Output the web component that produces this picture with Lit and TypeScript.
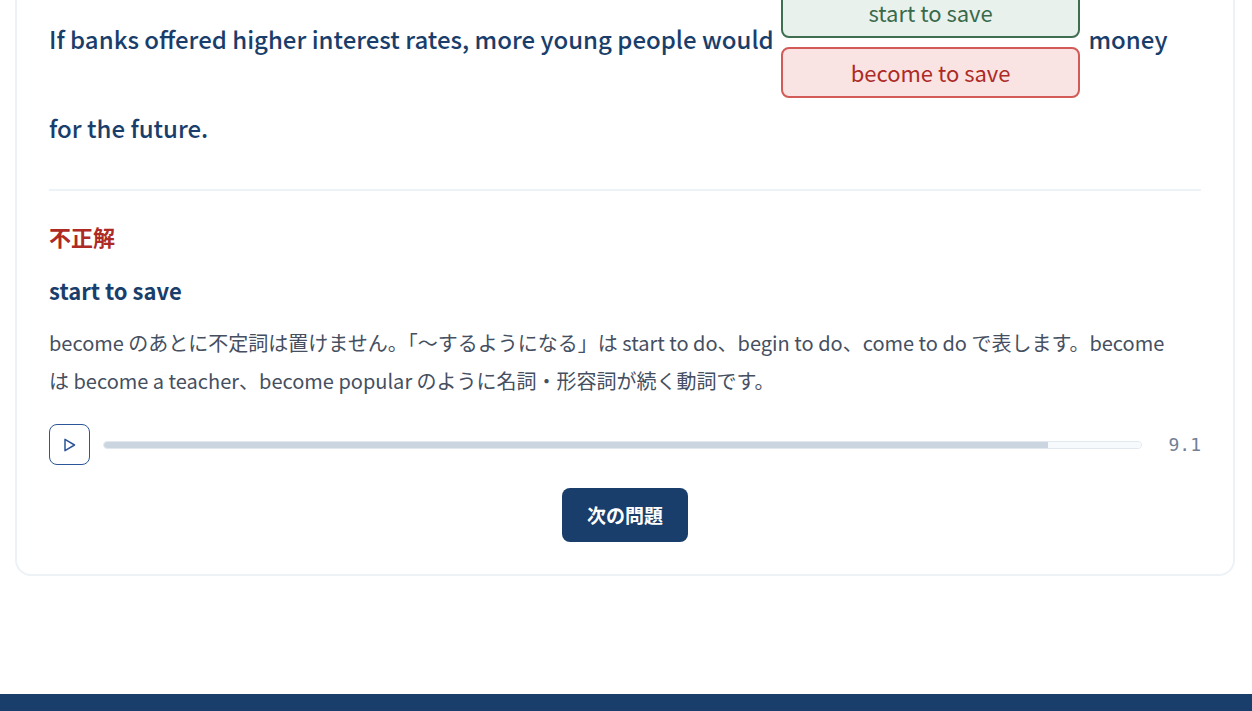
import { LitElement, html, css } from "lit";
import { customElement, property } from "lit/decorators.js";

@customElement("audio-bar")
class AudioBar extends LitElement {
  @property({ type: Number }) played = 91;
  @property() time = "9.1";

  static styles = css`
    :host {
      display: flex;
      align-items: center;
      gap: 13px;
    }
    .play {
      display: grid;
      place-items: center;
      box-sizing: border-box;
      width: 41px;
      height: 41px;
      padding: 0;
      border: 1px solid #2c5698;
      border-radius: 8px;
      background: #fff;
      color: #2c5698;
      cursor: pointer;
    }
    .track {
      appearance: none;
      display: block;
      box-sizing: border-box;
      flex: 1;
      min-width: 0;
      height: 8px;
      border: 1px solid #e2e8f0;
      border-radius: 4px;
      background: #f7fafc;
      overflow: hidden;
    }
    .track::-webkit-progress-bar {
      background: #f7fafc;
    }
    .track::-webkit-progress-value {
      background: #cbd5e0;
    }
    .time {
      min-width: 46px;
      text-align: right;
      color: #718096;
      font: 18px/24px "DejaVu Sans Mono", monospace;
    }
  `;

  render() {
    return html`
      <button class="play" type="button" aria-label="再生">
        <svg width="16" height="16" viewBox="0 0 16 16" fill="none" stroke="currentColor" stroke-width="1.5" stroke-linejoin="round" aria-hidden="true">
          <path d="M3 2.3v11.4L12.5 8z" />
        </svg>
      </button>
      <progress class="track" aria-label="再生位置" max="100" value=${this.played}></progress>
      <span class="time">${this.time}</span>
    `;
  }
}

@customElement("app-root")
class AppRoot extends LitElement {
  static styles = css`
    :host {
      display: flex;
      flex-direction: column;
      height: 100vh;
      overflow: hidden;
      background: #fff;
      color: #1a3e6b;
      font-family: "Noto Sans CJK JP", sans-serif;
    }
    .card {
      flex: none;
      margin: -50px 17px 0 15px;
      padding: 32px;
      border: 2px solid #edf2f7;
      border-radius: 16px;
    }
    .sentence {
      margin: 0;
      padding-bottom: 34px;
      border-bottom: 2px solid #edf2f7;
      font-size: 24px;
      font-weight: 500;
      line-height: 54px;
    }
    .choices {
      display: inline-flex;
      flex-direction: column;
      gap: 9px;
      width: 299px;
      margin: 3px 3px 3px 2px;
      vertical-align: middle;
    }
    .choice {
      box-sizing: border-box;
      height: 51px;
      padding: 0 16px 2px;
      border: 2px solid;
      border-radius: 8px;
      font: inherit;
      font-size: 22px;
      font-weight: 400;
      line-height: 40px;
    }
    .right {
      border-color: #3f6f50;
      background: #e8f1ec;
      color: #38694a;
    }
    .wrong {
      border-color: #d25a57;
      background: #f9e3e3;
      color: #ad2a25;
    }
    .verdict,
    .answer {
      margin: 0;
      font-size: 22px;
      font-weight: 700;
      line-height: 40px;
    }
    .verdict {
      margin-top: 25px;
      color: #ad2a25;
    }
    .answer {
      margin-top: 14px;
    }
    .note {
      margin: 14px 0 24px;
      padding-right: 16px;
      color: #454f5f;
      font-size: 20px;
      line-height: 38px;
    }
    .actions {
      display: flex;
      justify-content: center;
      margin-top: 23px;
    }
    .next {
      padding: 13px 25px;
      border: 0;
      border-radius: 8px;
      background: #1a3e6b;
      color: #fff;
      font: inherit;
      font-size: 19px;
      font-weight: 700;
      line-height: 28px;
      cursor: pointer;
    }
    .footer {
      flex: 1;
      margin-top: 118px;
      background: #1a3e6b;
    }
  `;

  render() {
    return html`
      <main class="card" lang="ja">
        <p class="sentence">
          If banks offered higher interest rates, more young people would
          <span class="choices">
            <button class="choice right" type="button">start to save</button>
            <button class="choice wrong" type="button">become to save</button>
          </span>
          money for the future.
        </p>
        <h2 class="verdict">不正解</h2>
        <h3 class="answer">start to save</h3>
        <p class="note">
          become のあとに不定詞は置けません。「〜するようになる」は start to do、begin to do、come to do で表します。become は become a teacher、become popular のように名詞・形容詞が続く動詞です。
        </p>
        <audio-bar></audio-bar>
        <div class="actions">
          <button class="next" type="button">次の問題</button>
        </div>
      </main>
      <footer class="footer"></footer>
    `;
  }
}
